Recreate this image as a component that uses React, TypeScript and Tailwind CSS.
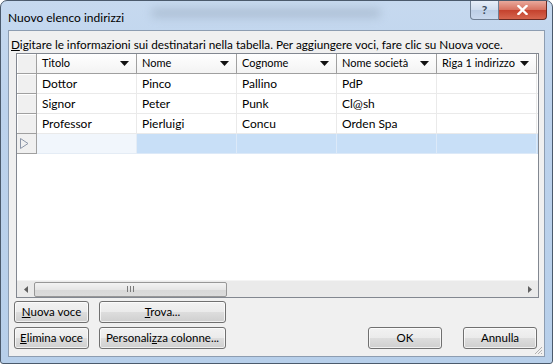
import React from "react";

const FONT = "font-['Lato','Liberation_Sans',Arial,sans-serif]";

const COLUMNS = ["Titolo", "Nome", "Cognome", "Nome società", "Riga 1 indirizzo"];

const ROWS = [
  ["Dottor", "Pinco", "Pallino", "PdP", ""],
  ["Signor", "Peter", "Punk", "Cl@sh", ""],
  ["Professor", "Pierluigi", "Concu", "Orden Spa", ""],
];

function DropArrow() {
  return (
    <svg width="9" height="5" viewBox="0 0 9 5" className="shrink-0">
      <path d="M0 0 L9 0 L4.5 5 Z" fill="#111" />
    </svg>
  );
}

function WinButton({ children, className = "" }: { children: React.ReactNode; className?: string }) {
  return (
    <div
      className={`h-[22px] flex items-center justify-center rounded-[3px] border border-[#707070] bg-[linear-gradient(to_bottom,#f2f2f2_0%,#ebebeb_48%,#dddddd_52%,#cfcfcf_100%)] shadow-[inset_0_0_0_1px_rgba(255,255,255,0.7)] text-[11.5px] text-black whitespace-nowrap ${className}`}
    >
      {children}
    </div>
  );
}

function Grid() {
  return (
    <div className="mx-[7px] mr-[5px] h-[245px] border border-[#828790] bg-white flex flex-col overflow-hidden">
      <div className="flex-1 grid grid-cols-[20px_100px_100px_100px_100px_100px_1fr] auto-rows-[20px] content-start">
        {/* header */}
        <div className="bg-[#f0f0f0] border-r border-b border-[#a0a0a0] shadow-[inset_1px_1px_0_#fff]" />
        {COLUMNS.map((c) => (
          <div
            key={c}
            className="flex items-center justify-between pl-[5px] pr-[7px] border-r border-b border-[#a0a0a0] bg-[linear-gradient(to_bottom,#ffffff,#f3f3f3)] text-[11px] text-black whitespace-nowrap"
          >
            <span>{c}</span>
            <DropArrow />
          </div>
        ))}
        <div className="border-b border-[#e6e6e6]" />

        {/* rows */}
        {ROWS.map((r, i) => (
          <React.Fragment key={i}>
            <div className="bg-[#f0f0f0] border-r border-b border-[#a0a0a0] shadow-[inset_1px_1px_0_#fff]" />
            {r.map((v, j) => (
              <div
                key={j}
                className="flex items-center pl-[5px] border-r border-b border-[#eaeaea] text-[12px] text-black"
              >
                {v}
              </div>
            ))}
            <div className="border-b border-[#eaeaea]" />
          </React.Fragment>
        ))}

        {/* new row */}
        <div className="bg-[#f0f0f0] border-r border-b border-[#a0a0a0] flex items-center pl-[3px]">
          <svg width="9" height="11" viewBox="0 0 9 11">
            <path d="M0.5 0.5 L8 5.5 L0.5 10.5 Z" fill="none" stroke="#8c96a8" strokeWidth="1" />
          </svg>
        </div>
        <div className="bg-[#f1f6fc] border-r border-b border-[#e4ecf5]" />
        {[0, 1, 2, 3].map((k) => (
          <div key={k} className="bg-[#c8dff7] border-r border-b border-[#dce9f8]" />
        ))}
        <div className="bg-[#c8dff7]" />
      </div>

      {/* horizontal scrollbar */}
      <div className="h-[17px] flex items-center bg-[#eaeaea] border-t border-[#f4f4f4]">
        <div className="w-[17px] flex items-center justify-center">
          <svg width="4" height="7" viewBox="0 0 4 7">
            <path d="M4 0 L0 3.5 L4 7 Z" fill="#606060" />
          </svg>
        </div>
        <div className="w-[193px] h-[15px] rounded-[2px] border border-[#979797] bg-[linear-gradient(to_bottom,#f3f3f3,#e6e6e6_50%,#d8d8d8_51%,#dcdcdc)] flex items-center justify-center">
          <div className="flex gap-[2px]">
            <div className="w-[1px] h-[6px] bg-[#7a7a7a]" />
            <div className="w-[1px] h-[6px] bg-[#7a7a7a]" />
            <div className="w-[1px] h-[6px] bg-[#7a7a7a]" />
          </div>
        </div>
        <div className="flex-1" />
        <div className="w-[17px] flex items-center justify-center">
          <svg width="4" height="7" viewBox="0 0 4 7">
            <path d="M0 0 L4 3.5 L0 7 Z" fill="#606060" />
          </svg>
        </div>
      </div>
    </div>
  );
}

export default function App() {
  return (
    <div className={`w-[553px] h-[364px] bg-white ${FONT}`}>
      <div className="w-full h-full rounded-t-[7px] rounded-b-[3px] border border-[#4b5a6c] bg-[linear-gradient(to_bottom,#c6d9ef_0%,#bcd2ec_30%,#b7cfea_100%)] flex flex-col">
        {/* title bar */}
        <div className="h-[29px] flex items-start relative">
          <div className="absolute left-[150px] top-[7px] w-[230px] h-[10px] rounded-full bg-[#8f9fb5]/40 blur-[4px]" />
          <span className="relative pl-[7px] pt-[8px] text-[12px] text-black">Nuovo elenco indirizzi</span>
          <div className="ml-auto mr-[5px] flex">
            <div className="w-[29px] h-[19px] rounded-bl-[4px] border border-t-0 border-[#6f7f93] bg-[linear-gradient(to_bottom,#e6eef8,#cfdced_50%,#bccee5_51%,#c9d9ee)] flex items-center justify-center text-[12px] font-bold text-[#3c4a5c]">
              ?
            </div>
            <div className="w-[48px] h-[19px] rounded-br-[4px] border border-l-0 border-t-0 border-[#6b2a22] bg-[linear-gradient(to_bottom,#e9a99c,#d7705e_50%,#c4412d_51%,#d6654e)] flex items-center justify-center">
              <svg width="11" height="10" viewBox="0 0 11 10">
                <path d="M1.5 1 L9.5 9 M9.5 1 L1.5 9" stroke="#fff" strokeWidth="2.4" strokeLinecap="square" />
              </svg>
            </div>
          </div>
        </div>

        {/* client area */}
        <div className="mx-[7px] flex-1 border border-[#8d9db1] bg-[#f0f0f0] flex flex-col relative">
          <div className="pl-[2px] pt-[7px] h-[22px] text-[11.75px] text-black leading-[14px] whitespace-nowrap">
            <span className="underline">D</span>igitare le informazioni sui destinatari nella tabella. Per aggiungere voci, fare clic su Nuova voce.
          </div>
          <Grid />

          <div className="mt-[3px] pl-[5px] pr-[7px] flex flex-col gap-[4px]">
            <div className="flex gap-[10px]">
              <WinButton className="w-[75px]">
                <span><span className="underline">N</span>uova voce</span>
              </WinButton>
              <WinButton className="w-[127px]">
                <span><span className="underline">T</span>rova...</span>
              </WinButton>
            </div>
            <div className="flex gap-[10px]">
              <WinButton className="w-[75px]">
                <span><span className="underline">E</span>limina voce</span>
              </WinButton>
              <WinButton className="w-[127px]">
                <span>Personali<span className="underline">z</span>za colonne...</span>
              </WinButton>
              <div className="flex-1" />
              <WinButton className="w-[74px]">OK</WinButton>
              <WinButton className="w-[74px] ml-[11px]">Annulla</WinButton>
            </div>
          </div>

          {/* resize grip */}
          <svg className="absolute right-[1px] bottom-[1px]" width="10" height="10" viewBox="0 0 10 10">
            <path d="M9 2 L2 9 M9 5 L5 9 M9 8 L8 9" stroke="#b0b0b0" strokeWidth="1" />
          </svg>
        </div>
        <div className="h-[6px]" />
      </div>
    </div>
  );
}
